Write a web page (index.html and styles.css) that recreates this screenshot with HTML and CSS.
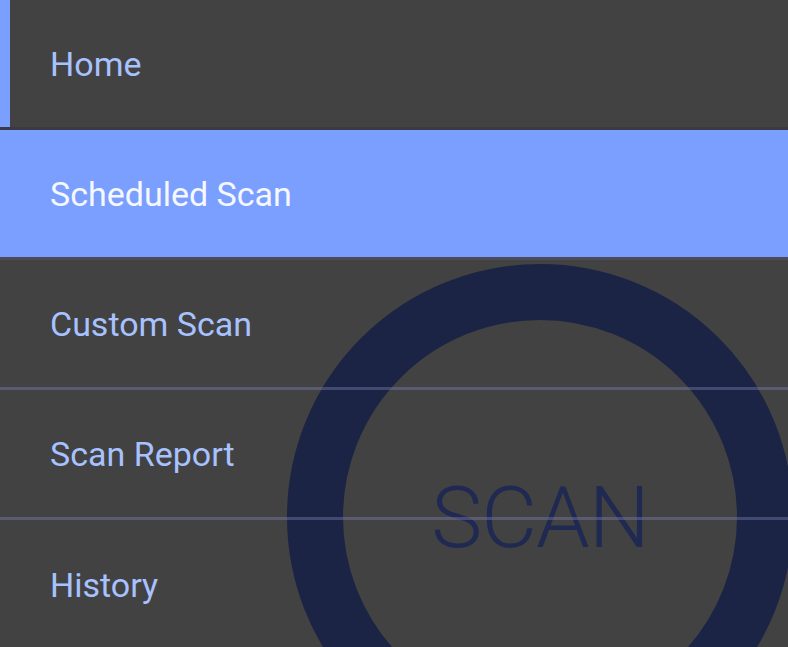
FILE: index.html
```html
<!DOCTYPE html>
<html lang="en">
<head>
    <meta charset="UTF-8">
    <meta name="viewport" content="width=device-width, initial-scale=1.0">
    <title>Scanner</title>
    <link rel="stylesheet" href="styles.css">
</head>
<body>
    <div class="scan-button">
        <span>SCAN</span>
    </div>

    <ul class="menu">
        <li class="menu-item current">Home</li>
        <li class="menu-item active">Scheduled Scan</li>
        <li class="menu-item">Custom Scan</li>
        <li class="menu-item">Scan Report</li>
        <li class="menu-item">History</li>
    </ul>
</body>
</html>
```

FILE: styles.css
```css
html, body {
    margin: 0;
    height: 100%;
    overflow: hidden;
}

body {
    font-family: Roboto, "Liberation Sans", sans-serif;
    background-color: #424242;
    position: relative;
}

/* big round button behind the menu */
.scan-button {
    position: absolute;
    left: 287px;
    top: 264px;
    width: 506px;
    height: 506px;
    box-sizing: border-box;
    border: 56px solid #1b2444;
    border-radius: 50%;
    display: flex;
    align-items: center;
    justify-content: center;
    z-index: 0;
}

.scan-button span {
    font-size: 86px;
    font-weight: 300;
    color: #1f2952;
    letter-spacing: -1px;
}

.menu {
    list-style: none;
    margin: 0;
    padding: 0;
    position: relative;
    z-index: 1;
}

.menu-item {
    height: 130px;
    box-sizing: border-box;
    display: flex;
    align-items: center;
    padding-left: 50px;
    font-size: 34px;
    color: #a8c1ff;
    border-bottom: 3px solid rgba(120, 120, 170, 0.45);
}

.menu-item.current {
    box-shadow: inset 10px 0 0 #7b9fff;
    border-bottom-color: #3a3a42;
}

.menu-item.active {
    background-color: #7b9fff;
    color: #f6f8ff;
    border-bottom-color: #4b4b5a;
}

.menu-item:last-child {
    border-bottom: none;
}
```
